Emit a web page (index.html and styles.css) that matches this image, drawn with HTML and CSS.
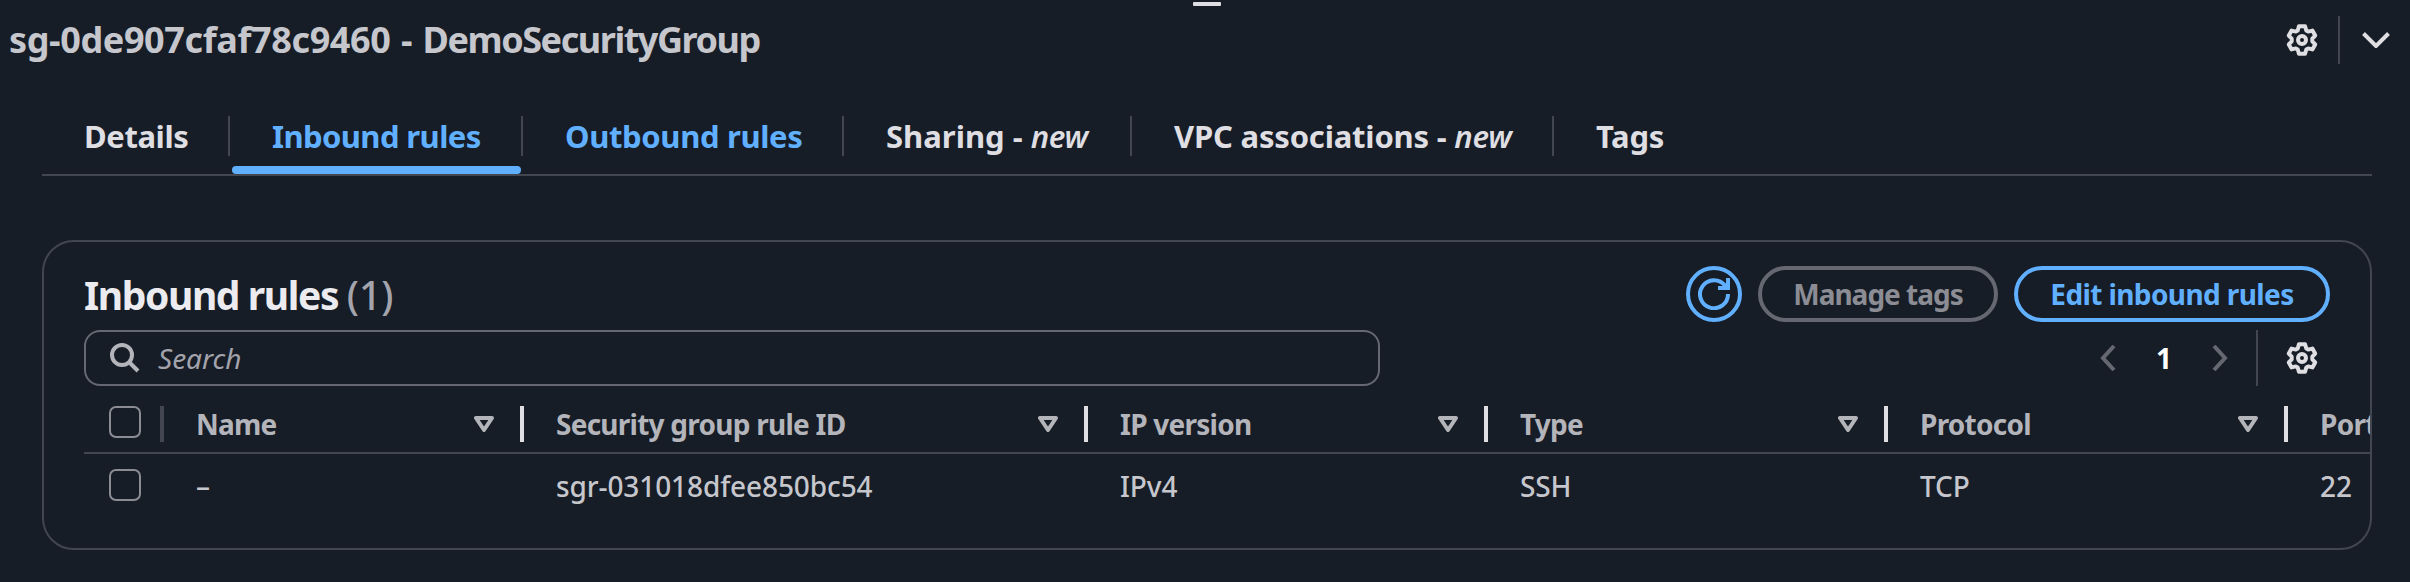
FILE: index.html
```
<!DOCTYPE html>
<html lang="en">
<head>
<meta charset="utf-8">
<title>Security group</title>
<link rel="stylesheet" href="styles.css">
</head>
<body>
<svg class="defs" aria-hidden="true">
  <symbol id="gear" viewBox="0 0 32 32">
    <g fill="none" stroke="currentColor" stroke-width="4" stroke-linejoin="round">
      <path d="M13 2.200h6l1.300 4.300 1.900 1.100 4.200-1 2.800 5-2.900 3.100v2.600l2.900 3.100-2.800 5-4.200-1-1.900 1.100L19 29.800h-6l-1.300-4.300-1.900-1.100-4.200 1-2.800-5 2.900-3.100v-2.600l-2.900-3.100 2.800-5 4.200 1 1.900-1.100z"/>
      <circle cx="16" cy="16" r="4"/>
    </g>
  </symbol>
  <symbol id="caret" viewBox="0 0 20 16">
    <path d="M2 2h16l-8 12z" fill="none" stroke="currentColor" stroke-width="4" stroke-linejoin="round"/>
  </symbol>
</svg>
<div class="panel">
  <div class="handle"></div>
  <header class="head">
    <h1 class="title">sg-0de907cfaf78c9460 - <span class="title-name">DemoSecurityGroup</span></h1>
    <div class="head-actions">
      <svg class="gear"><use href="#gear"/></svg>
      <span class="head-divider"></span>
      <svg class="chevron" viewBox="0 0 28 16"><path d="M1.500 1.500L14 14 26.500 1.500" fill="none" stroke="currentColor" stroke-width="4"/></svg>
    </div>
  </header>
  <nav class="tabs">
    <a class="tab tab-details">Details</a>
    <a class="tab tab-inbound active">Inbound rules</a>
    <a class="tab tab-outbound link">Outbound rules</a>
    <a class="tab tab-sharing">Sharing - <i>new</i></a>
    <a class="tab tab-vpc">VPC associations - <i>new</i></a>
    <a class="tab tab-tags">Tags</a>
  </nav>
  <section class="card">
    <div class="card-head">
      <h2 class="card-title">Inbound rules <span class="count">(1)</span></h2>
      <div class="buttons">
        <button class="btn refresh"><svg viewBox="0 0 32 32"><path d="M30 16A14 14 0 1 1 27 7.500L30 10M30 0v10H20" fill="none" stroke="currentColor" stroke-width="4"/></svg></button>
        <button class="btn manage">Manage tags</button>
        <button class="btn edit">Edit inbound rules</button>
      </div>
    </div>
    <div class="tools">
      <div class="search">
        <svg viewBox="0 0 30 30"><g fill="none" stroke="currentColor" stroke-width="4"><circle cx="12" cy="12" r="10"/><path d="M19 19l9 9"/></g></svg>
        <span>Search</span>
      </div>
      <div class="pager">
        <svg class="arrow" viewBox="0 0 16 26"><path d="M14 1L3 13l11 12" fill="none" stroke="currentColor" stroke-width="4"/></svg>
        <span class="page">1</span>
        <svg class="arrow" viewBox="0 0 16 26"><path d="M2 1l11 12L2 25" fill="none" stroke="currentColor" stroke-width="4"/></svg>
        <span class="pager-divider"></span>
        <svg class="gear"><use href="#gear"/></svg>
      </div>
    </div>
    <div class="table">
      <div class="row row-head">
        <div class="cell check"><span class="box"></span></div>
        <div class="cell">Name<svg class="caret"><use href="#caret"/></svg></div>
        <div class="cell">Security group rule ID<svg class="caret"><use href="#caret"/></svg></div>
        <div class="cell">IP version<svg class="caret"><use href="#caret"/></svg></div>
        <div class="cell">Type<svg class="caret"><use href="#caret"/></svg></div>
        <div class="cell">Protocol<svg class="caret"><use href="#caret"/></svg></div>
        <div class="cell last">Port</div>
      </div>
      <div class="row row-body">
        <div class="cell check"><span class="box"></span></div>
        <div class="cell">–</div>
        <div class="cell">sgr-031018dfee850bc54</div>
        <div class="cell">IPv4</div>
        <div class="cell">SSH</div>
        <div class="cell">TCP</div>
        <div class="cell last">22</div>
      </div>
    </div>
  </section>
</div>
</body>
</html>
```
FILE: styles.css
```
* { box-sizing: border-box; }
body {
  margin: 0;
  background: #161d26;
  color: #c6c6cd;
  font-family: "Noto Sans", sans-serif;
  font-size: 28px;
  overflow: hidden;
}
svg { display: block; flex: none; }
.defs { position: absolute; width: 0; height: 0; }
.panel { position: relative; height: 582px; overflow: hidden; }
.handle {
  position: absolute;
  left: 1193px;
  top: 2px;
  width: 28px;
  height: 4px;
  border-radius: 1px;
  background: #dedee3;
}
.head {
  display: flex;
  justify-content: space-between;
  align-items: center;
  height: 80px;
  padding: 0 20px 0 9px;
}
.title {
  margin: 0;
  font-size: 36px;
  line-height: 48px;
  font-weight: 700;
  letter-spacing: -0.38px;
  word-spacing: 1.5px;
}
.title-name { letter-spacing: -1.45px; }
.head-actions { display: flex; align-items: center; color: #dedee3; }
.gear { width: 32px; height: 32px; color: #dedee3; }
.head-divider { width: 2px; height: 48px; margin: 0 22px 0 20px; background: #424650; }
.chevron { width: 28px; height: 16px; }

.tabs {
  display: flex;
  height: 74px;
  margin: 22px 38px 0 42px;
  border-bottom: 2px solid #424650;
}
.tab {
  position: relative;
  flex: none;
  height: 72px;
  padding-left: 42px;
  color: #dedee3;
  font-size: 31px;
  font-weight: 700;
  line-height: 69px;
  letter-spacing: -0.6px;
  white-space: nowrap;
}
.tab i { font-weight: 600; letter-spacing: -0.3px; }
.tab:not(:last-child)::after {
  content: "";
  position: absolute;
  right: 0;
  top: 14px;
  width: 2px;
  height: 40px;
  background: #424650;
}
.tab-details { width: 188px; letter-spacing: -0.4px; }
.tab-inbound { width: 293px; }
.tab-outbound { width: 321px; letter-spacing: -0.35px; }
.tab-sharing { width: 288px; letter-spacing: 0; }
.tab-vpc { width: 422px; letter-spacing: -0.2px; }
.tab-tags { letter-spacing: -0.3px; }
.active, .link { color: #61b0ff; }
.active::before {
  content: "";
  position: absolute;
  left: 2px;
  right: 2px;
  bottom: 0;
  height: 8px;
  border-radius: 4px;
  background: #61b0ff;
}

.card {
  width: 2330px;
  height: 310px;
  margin: 64px 0 0 42px;
  padding-top: 24px;
  border: 2px solid #424650;
  border-radius: 32px;
  overflow: hidden;
}
.card-head, .tools {
  display: flex;
  justify-content: space-between;
  align-items: center;
  height: 56px;
  padding: 0 40px;
}
.card-title {
  margin: 0;
  padding-top: 1px;
  color: #ebebf0;
  font-size: 39px;
  font-weight: 700;
  line-height: 56px;
  letter-spacing: -1.4px;
}
.count { color: #a4a4ad; font-weight: 500; letter-spacing: 0; }
.buttons { display: flex; gap: 16px; }
.btn {
  display: flex;
  align-items: center;
  justify-content: center;
  height: 56px;
  padding: 0;
  border: 4px solid #61b0ff;
  border-radius: 28px;
  background: none;
  color: #61b0ff;
  font: 700 28px/48px "Noto Sans", sans-serif;
  letter-spacing: -0.6px;
}
.refresh { width: 56px; }
.refresh svg { width: 32px; height: 32px; }
.manage { width: 240px; border-color: #656871; color: #8c8c94; letter-spacing: -1px; }
.edit { width: 316px; }

.tools { margin-top: 8px; }
.search {
  display: flex;
  align-items: center;
  gap: 18px;
  width: 1296px;
  height: 56px;
  padding-left: 24px;
  border: 2px solid #656871;
  border-radius: 16px;
  color: #b4b4bb;
}
.search svg { width: 30px; height: 30px; }
.search span { color: #a4a4ad; font-style: italic; }
.pager { display: flex; align-items: center; color: #656871; padding-right: 12px; }
.arrow { width: 16px; height: 26px; }
.page { width: 96px; color: #fff; font-weight: 700; text-align: center; }
.pager-divider { width: 2px; height: 56px; margin: 0 28px; background: #424650; }

.table { width: 2600px; padding-left: 40px; }
.row { display: grid; grid-template-columns: 80px 360px 564px 400px 400px 400px 400px; }
.row-head {
  height: 68px;
  padding-top: 6px;
  border-bottom: 2px solid #424650;
  color: #b4b4bb;
  font-weight: 700;
  letter-spacing: -0.75px;
}
.row-body { height: 62px; font-weight: 500; letter-spacing: -0.1px; }
.cell {
  position: relative;
  display: flex;
  align-items: center;
  justify-content: space-between;
  height: 64px;
  padding: 0 30px 0 32px;
}
.row-head .cell { padding-bottom: 1px; }
.cell.check { padding: 0 0 2px 25px; }
.row-head .cell.check { padding-bottom: 4px; }
.box { width: 32px; height: 32px; border: 2px solid #8c8c94; border-radius: 7px; }
.row-head .cell:not(.last)::after {
  content: "";
  position: absolute;
  right: 0;
  top: 14px;
  width: 4px;
  height: 36px;
  background: #dedee3;
}
.row-head .cell.check:not(.last)::after { background: #424650; }
.caret { width: 20px; height: 16px; }
```
